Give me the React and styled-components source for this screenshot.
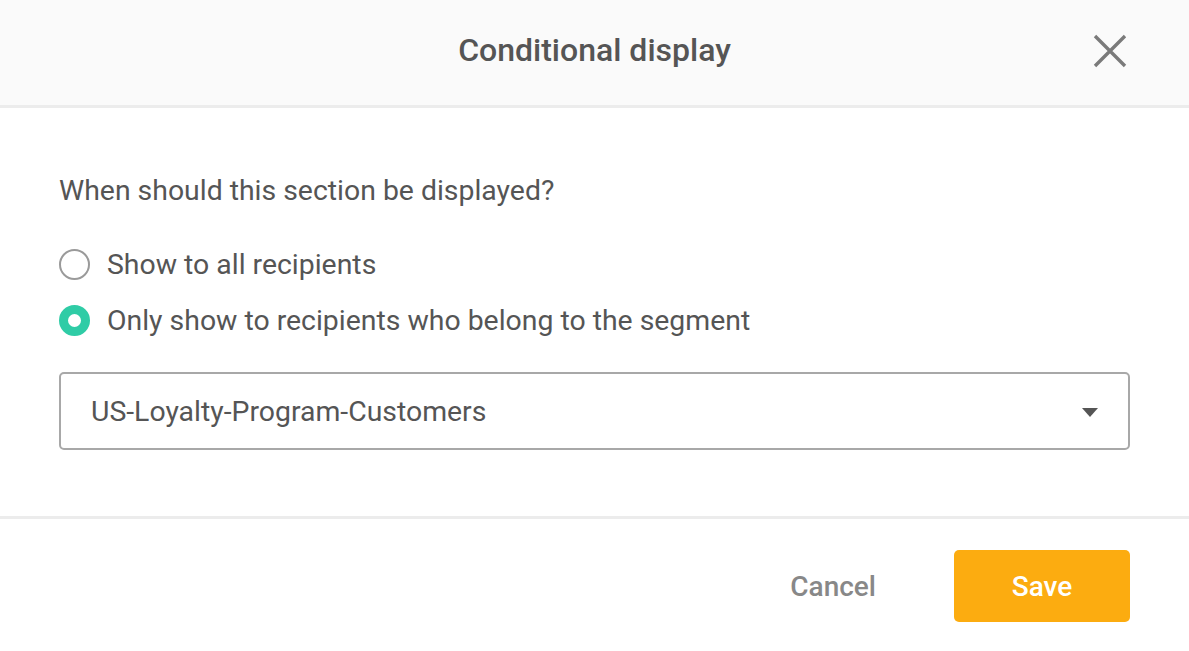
import React, { useState } from "react";
import styled, { createGlobalStyle } from "styled-components";

const GlobalStyle = createGlobalStyle`
  html, body {
    margin: 0;
    padding: 0;
    background: #ffffff;
  }
  body {
    font-family: Roboto, "Liberation Sans", sans-serif;
  }
  * {
    box-sizing: border-box;
  }
`;

const options = [
  { id: "all", label: "Show to all recipients" },
  { id: "segment", label: "Only show to recipients who belong to the segment" },
];

const App = () => {
  const [choice, setChoice] = useState("segment");

  return (
    <Modal>
      <GlobalStyle />
      <Header>
        <span />
        <Title>Conditional display</Title>
        <CloseButton aria-label="Close">
          <svg width="34" height="34" viewBox="0 0 34 34">
            <path d="M2 2 L32 32 M32 2 L2 32" stroke="#7a7a7a" strokeWidth="3.4" />
          </svg>
        </CloseButton>
      </Header>

      <Body>
        <Question>When should this section be displayed?</Question>
        <RadioList>
          {options.map((o) => (
            <RadioRow key={o.id} onClick={() => setChoice(o.id)}>
              <RadioDot $checked={choice === o.id} />
              <RadioLabel>{o.label}</RadioLabel>
            </RadioRow>
          ))}
        </RadioList>
        <Select>
          <SelectText>US-Loyalty-Program-Customers</SelectText>
          <Caret />
        </Select>
      </Body>

      <Footer>
        <CancelButton>Cancel</CancelButton>
        <SaveButton>Save</SaveButton>
      </Footer>
    </Modal>
  );
};

export default App;

const Modal = styled.div`
  width: 1189px;
  height: 651px;
  background: #ffffff;
  display: flex;
  flex-direction: column;
`;

const Header = styled.div`
  height: 108px;
  background: #fafafa;
  border-bottom: 3px solid #ececec;
  display: grid;
  grid-template-columns: 1fr auto 1fr;
  align-items: center;
  padding: 0 62px;
`;

const Title = styled.h1`
  margin: 0;
  padding-bottom: 5px;
  font-size: 32px;
  font-weight: 500;
  color: #555555;
`;

const CloseButton = styled.button`
  justify-self: end;
  border: none;
  background: transparent;
  padding: 0;
  width: 34px;
  height: 34px;
  margin-bottom: 4px;
  cursor: pointer;
  display: flex;
`;

const Body = styled.div`
  padding: 68px 59px 66px;
  border-bottom: 3px solid #ececec;
`;

const Question = styled.div`
  font-size: 28.4px;
  line-height: 30px;
  color: #555555;
`;

const RadioList = styled.div`
  display: flex;
  flex-direction: column;
  gap: 16px;
  margin-top: 38px;
`;

const RadioRow = styled.label`
  display: flex;
  align-items: center;
  height: 40px;
  cursor: pointer;
`;

const RadioDot = styled.span`
  width: 31px;
  height: 31px;
  border-radius: 50%;
  flex-shrink: 0;
  border: ${(p) => (p.$checked ? "9px solid #2fcca6" : "2px solid #9a9a9a")};
  background: #ffffff;
  margin-right: 17px;
`;

const RadioLabel = styled.span`
  font-size: 28.4px;
  color: #555555;
`;

const Select = styled.div`
  margin-top: 32px;
  height: 78px;
  border: 2px solid #a8a8a8;
  border-radius: 5px;
  display: flex;
  align-items: center;
  justify-content: space-between;
  padding: 0 30px 0 30px;
`;

const SelectText = styled.span`
  font-size: 28.4px;
  color: #555555;
`;

const Caret = styled.span`
  width: 0;
  height: 0;
  border-left: 8px solid transparent;
  border-right: 8px solid transparent;
  border-top: 9px solid #555555;
  margin-top: 2px;
`;

const Footer = styled.div`
  display: flex;
  justify-content: flex-end;
  align-items: center;
  gap: 78px;
  padding: 31px 59px 0;
`;

const CancelButton = styled.button`
  border: none;
  background: transparent;
  padding: 0;
  font-family: Roboto, "Liberation Sans", sans-serif;
  font-size: 28px;
  font-weight: 500;
  color: #888888;
  cursor: pointer;
`;

const SaveButton = styled.button`
  width: 176px;
  height: 72px;
  border: none;
  border-radius: 5px;
  background: #fcac10;
  color: #ffffff;
  font-family: Roboto, "Liberation Sans", sans-serif;
  font-size: 28px;
  font-weight: 500;
  cursor: pointer;
`;
